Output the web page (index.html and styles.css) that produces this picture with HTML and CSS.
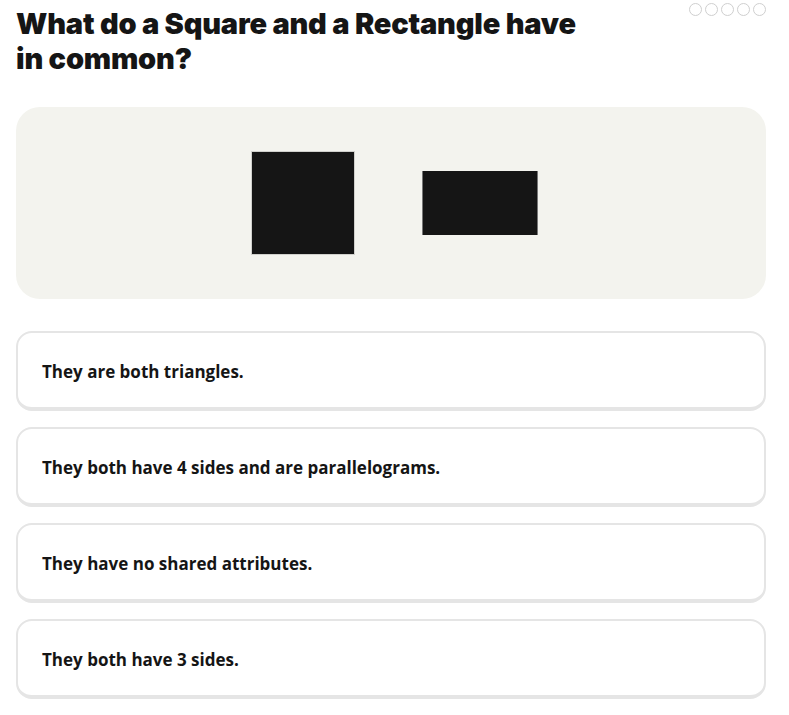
FILE: index.html
```html
<!DOCTYPE html>
<html>
<head>
<meta charset="utf-8">
<link rel="stylesheet" href="styles.css">
</head>
<body>
<div class="page">
  <header class="head">
    <h1 class="title">What do a Square and a Rectangle have in common?</h1>
    <div class="dots">
      <span class="dot"></span><span class="dot"></span><span class="dot"></span><span class="dot"></span><span class="dot"></span>
    </div>
  </header>
  <div class="figure">
    <div class="square"></div>
    <div class="rect"></div>
  </div>
  <div class="options">
    <div class="option">They are both triangles.</div>
    <div class="option">They both have 4 sides and are parallelograms.</div>
    <div class="option">They have no shared attributes.</div>
    <div class="option">They both have 3 sides.</div>
  </div>
</div>
</body>
</html>
```
FILE: styles.css
```css
* { box-sizing: border-box; }
html, body { margin: 0; padding: 0; background: #fff; }
body { color: #151515; font-family: "Open Sans", "Noto Sans", sans-serif; }
.page { width: 750px; margin-left: 16px; }
.head { display: flex; justify-content: space-between; align-items: flex-start; }
.title {
  margin: 6px 0 0 0;
  width: 578px;
  font-family: "Inter", sans-serif;
  font-weight: 900;
  font-size: 29px;
  line-height: 35px;
  letter-spacing: -0.2px;
}
.dots { display: flex; gap: 3px; margin-top: 3px; }
.dot { width: 13px; height: 13px; border: 1px solid #cfcfcf; border-radius: 50%; }
.figure {
  margin-top: 31px;
  height: 192px;
  background: #f3f3ee;
  border-radius: 24px;
  display: flex;
  align-items: center;
  justify-content: center;
  gap: 67px;
  padding-left: 6px;
}
.square { width: 104px; height: 104px; background: #151515; border: 1px solid #d0d0cc; }
.rect { width: 116px; height: 64px; background: #151515; border-left: 1px solid #777; border-right: 1px solid #777; }
.options { margin-top: 32px; display: flex; flex-direction: column; gap: 16px; }
.option {
  height: 80px;
  border: 2px solid #e5e5e5;
  border-bottom-width: 4px;
  border-radius: 16px;
  padding: 2px 24px 0;
  display: flex;
  align-items: center;
  font-weight: 700;
  font-size: 17px;
}
```
